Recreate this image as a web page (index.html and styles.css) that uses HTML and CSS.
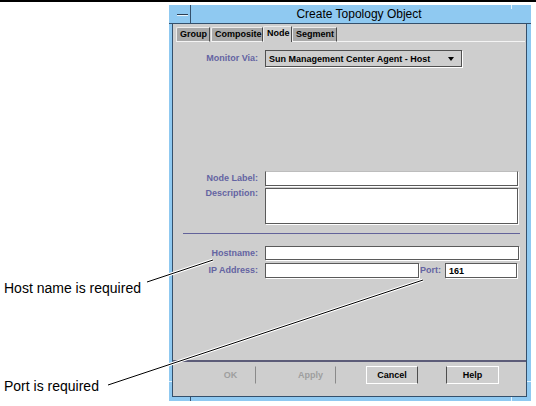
FILE: index.html
```html
<!DOCTYPE html>
<html>
<head>
<meta charset="utf-8">
<link rel="stylesheet" href="styles.css">
</head>
<body>
<div class="topline"></div>
<div class="stage">
  <div class="notes">
    <div class="note note1">Host name is required</div>
    <div class="note note2">Port is required</div>
  </div>
  <div class="window">
    <div class="titlebar">
      <div class="menu"><span class="dash"></span></div>
      <div class="title">Create Topology Object</div>
    </div>
    <div class="frame-body">
      <div class="client">
        <div class="tabs">
          <div class="tab t-group">Group</div>
          <div class="tab t-comp">Composite</div>
          <div class="tab t-node active">Node</div>
          <div class="tab t-seg">Segment</div>
          <div class="tab-fill"></div>
        </div>
        <div class="panel">
          <div class="row r-monitor">
            <div class="lbl">Monitor Via:</div>
            <div class="combo"><span class="combo-text">Sun Management Center Agent - Host</span><span class="arrow"></span></div>
          </div>
          <div class="row r-nodelabel">
            <div class="lbl">Node Label:</div>
            <div class="field f-full f-label"></div>
          </div>
          <div class="row r-desc">
            <div class="lbl lbl-top">Description:</div>
            <div class="field f-full f-desc"></div>
          </div>
          <div class="sep"></div>
          <div class="row r-host">
            <div class="lbl">Hostname:</div>
            <div class="field f-full f-host"></div>
          </div>
          <div class="row r-ip">
            <div class="lbl">IP Address:</div>
            <div class="field f-ip"></div>
            <div class="lbl-port">Port:</div>
            <div class="field f-port"><span class="val">161</span></div>
          </div>
        </div>
        <div class="footer">
          <div class="btn b-ok disabled">OK</div>
          <div class="btn b-apply disabled">Apply</div>
          <div class="btn b-cancel">Cancel</div>
          <div class="btn b-help">Help</div>
        </div>
      </div>
    </div>
    <span class="tick tk-top"></span>
    <span class="tick tk-left"></span>
    <span class="tick tk-right"></span>
    <span class="tick tk-bl"></span>
    <span class="tick tk-br"></span>
  </div>
</div>
<svg class="leaders" viewBox="0 0 536 406" width="536" height="406">
  <line x1="147" y1="282" x2="213" y2="260" stroke="#fff" stroke-width="3"/>
  <line x1="147" y1="282" x2="213" y2="260" stroke="#000" stroke-width="1"/>
  <line x1="108" y1="385" x2="423" y2="280" stroke="#fff" stroke-width="3"/>
  <line x1="108" y1="385" x2="423" y2="280" stroke="#000" stroke-width="1"/>
</svg>
</body>
</html>
```
FILE: styles.css
```css
* { box-sizing: border-box; }
html, body { margin: 0; padding: 0; background: #fff; }
body {
  width: 536px; height: 406px; overflow: hidden; position: relative;
  font-family: "Liberation Sans", Arial, sans-serif;
}
.topline { height: 2px; background: #000; }
.stage { display: flex; }
.notes { width: 169px; display: flex; flex-direction: column; padding-left: 4px; }
.note { font-size: 14px; line-height: 16px; color: #000; white-space: nowrap; }
.note1 { margin-top: 278px; }
.note2 { margin-top: 82px; }

.window {
  margin-top: 3px; width: 362px; height: 396px;
  background: #8fc9f1; display: flex; flex-direction: column; position: relative;
}
.titlebar { height: 19px; border-bottom: 1px solid #34506c; display: flex; }
.menu {
  width: 22px; border-right: 1px solid #34506c;
  display: flex; align-items: center; padding-left: 8px;
}
.dash { display: block; width: 11px; height: 2px; border-top: 1px solid #2c3e52; background: #e8f4fc; margin-top: 2px; }
.title {
  flex: 1; text-align: center; font-size: 12px; line-height: 19px; color: #000;
  padding-right: 4px;
}
.frame-body { flex: 1; padding: 0 4px 4px 3px; display: flex; }
.client {
  flex: 1; background: #cecece; border: 1px solid #34506c; border-top: none;
  display: flex; flex-direction: column;
}
.tabs { display: flex; height: 15px; margin-top: 3px; padding-left: 3px; }
.tab {
  font-size: 9px; font-weight: bold; line-height: 13px; color: #000;
  background: #a9a9a9; border-top: 1px solid #ececec; border-left: 1px solid #ececec;
  border-right: 1px solid #4c4c4c; border-bottom: 1px solid #f4f4f4;
  border-top-left-radius: 2px; padding-left: 3px; white-space: nowrap;
}
.t-group { width: 34px; margin-right: 1px; }
.t-comp { width: 52px; }
.t-node { width: 29px; }
.t-seg { width: 45px; }
.tab.active { background: #cecece; border-bottom: none; margin-top: -1px; height: 16px; }
.tab-fill { flex: 1; border-bottom: 1px solid #f4f4f4; margin-right: 1px; }

.panel { flex: 1; display: flex; flex-direction: column; }
.row { display: flex; align-items: center; }
.lbl {
  width: 85px; margin-right: 7px; text-align: right; font-size: 9px; font-weight: bold;
  color: #6464a2; white-space: nowrap; line-height: 11px;
}
.lbl-top { align-self: flex-start; margin-top: 0px; }
.r-monitor { margin-top: 8px; }
.combo {
  width: 197px; height: 17px; border: 1px solid #505050; box-shadow: 1px 1px 0 #fff;
  display: flex; align-items: center; padding-left: 3px; padding-right: 7px;
}
.combo-text { flex: 1; font-size: 9px; font-weight: bold; color: #000; white-space: nowrap; }
.arrow { width: 0; height: 0; border-left: 3px solid transparent; border-right: 3px solid transparent; border-top: 4px solid #000; }
.field { background: #fff; border: 1px solid #5a5a5a; box-shadow: 1px 1px 0 #fff; }
.f-full { width: 253px; }
.r-nodelabel { margin-top: 104px; }
.f-label { height: 15px; border-top-color: #bdbdbd; }
.r-desc { margin-top: 2px; }
.f-desc { height: 36px; }
.sep { margin: 9px 0 0 10px; width: 337px; height: 1px; background: #62629a; }
.r-host { margin-top: 12px; }
.f-host { height: 14px; width: 254px; }
.r-ip { margin-top: 3px; }
.f-ip { width: 154px; height: 15px; }
.lbl-port {
  width: 26px; padding-left: 1px; font-size: 9px; font-weight: bold; color: #6464a2; line-height: 11px;
}
.f-port { width: 72px; height: 15px; display: flex; align-items: center; padding-left: 3px; }
.val { font-size: 9px; font-weight: bold; color: #000; }

.footer {
  border-top: 2px solid #5c5c78; height: 36px; display: flex; align-items: flex-start;
  padding-top: 4px; padding-left: 32px;
}
.btn {
  height: 18px; font-size: 9px; font-weight: bold; color: #000; text-align: center; line-height: 16px;
  border: 1px solid transparent;
}
.btn.disabled { color: #9e9e9e; }
.b-ok { width: 51px; border-right-color: #8a8a8a; }
.b-apply { width: 51px; margin-left: 29px; border-right-color: #8a8a8a; }
.b-cancel { width: 52px; margin-left: 30px; border-color: #fff; border-right-color: #4e4e4e; }
.b-help { width: 53px; margin-left: 28px; border-color: #fff; border-left-color: #4e4e4e; }

.tick { position: absolute; display: block; }
.tk-top { left: 342px; top: 0; width: 1px; height: 4px; background: #e4f3fd; }
.tk-left { left: 0; top: 376px; width: 3px; height: 1px; background: #e4f3fd; }
.tk-right { right: 0; top: 376px; width: 4px; height: 1px; background: #e4f3fd; }
.tk-bl { left: 21px; bottom: 0; width: 1px; height: 4px; background: #34506c; }
.tk-br { left: 342px; bottom: 0; width: 1px; height: 4px; background: #e4f3fd; }

.leaders { position: absolute; left: 0; top: 0; pointer-events: none; }
```
